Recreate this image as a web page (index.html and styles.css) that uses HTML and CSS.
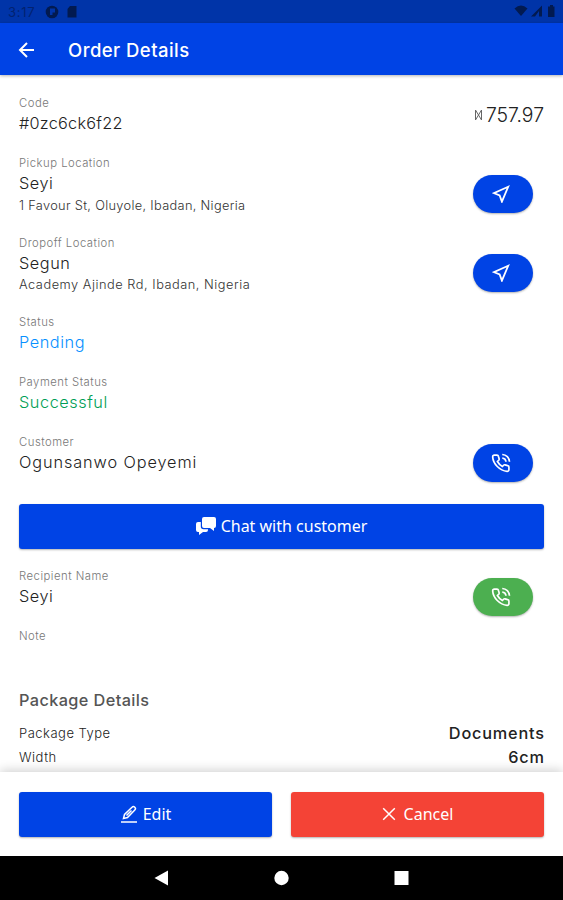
FILE: index.html
```html
<!DOCTYPE html>
<html lang="en">
  <head>
    <meta charset="utf-8">
    <meta name="viewport" content="width=device-width, initial-scale=1">
    <title>Order Details</title>
    <link rel="stylesheet" href="styles.css">
  </head>
  <body>
    <svg width="0" height="0" class="defs">
      <symbol id="send" viewBox="0 0 20 20"><path d="M18 2 L2 9 L8.500 11.500 L11 18.500 Z"/></symbol>
      <symbol id="call" viewBox="0 0 24 24">
        <path d="M21.5 17v3a2 2 0 0 1-2.2 2C10.500 21.300 2.500 13 2 4.600A2 2 0 0 1 4 2.500h3.200a1.800 1.800 0 0 1 1.700 1.400l.9 3.300a1.800 1.800 0 0 1-.6 1.700l-1.500 1.300a15 15 0 0 0 6 6l1.400-1.500a1.800 1.800 0 0 1 1.700-.5l3.200.9a1.800 1.800 0 0 1 1.500 1.900z"/>
        <path d="M13.500 6a5 5 0 0 1 4.500 4.500M13.500 1.800a9 9 0 0 1 8.700 8.700"/>
      </symbol>
    </svg>

    <div class="statusbar">
      <span class="time">3:17</span>
      <svg class="status-icon" width="14" height="14" viewBox="0 0 14 14"><circle cx="7" cy="7" r="6.300"/><path class="cut" d="M5 3.500h5v4H7.500V10H5z"/></svg>
      <svg class="status-icon card" width="12" height="14" viewBox="0 0 12 14"><path d="M4 1h6.500v11.500h-9V4z"/></svg>
      <svg class="status-icon right" width="42" height="14" viewBox="0 0 42 14">
        <path d="M0.500 4.500Q7 -1.500 13.500 4.500L7 12z"/>
        <path d="M17 12.500L28 1.500v11h-3V7l-4 5.500z"/>
        <path d="M34 2.500h2V1h3v1.500h1.500v10.500H34z"/>
      </svg>
    </div>

    <div class="appbar">
      <svg width="18" height="18" viewBox="0 0 18 18"><path d="M16 9H2M9 2L2 9l7 7"/></svg>
      <h1>Order Details</h1>
    </div>

    <div class="content">
      <div class="row">
        <div class="field">
          <div class="label">Code</div>
          <div class="value code">#0zc6ck6f22</div>
        </div>
        <div class="price">
          <svg width="9" height="12" viewBox="0 0 9 12"><path d="M1.500 1v10M7.500 1v10M1.500 1l6 10M7.500 1l-6 10"/></svg>
          <span>757.97</span>
        </div>
      </div>

      <div class="row">
        <div class="field">
          <div class="label">Pickup Location</div>
          <div class="value">Seyi</div>
          <div class="address">1 Favour St, Oluyole, Ibadan, Nigeria</div>
        </div>
        <div class="pill"><svg width="18" height="18"><use href="#send"/></svg></div>
      </div>

      <div class="row">
        <div class="field">
          <div class="label">Dropoff Location</div>
          <div class="value">Segun</div>
          <div class="address dropoff">Academy Ajinde Rd, Ibadan, Nigeria</div>
        </div>
        <div class="pill"><svg width="18" height="18"><use href="#send"/></svg></div>
      </div>

      <div class="row">
        <div class="field">
          <div class="label">Status</div>
          <div class="value pending">Pending</div>
        </div>
      </div>

      <div class="row">
        <div class="field">
          <div class="label">Payment Status</div>
          <div class="value success">Successful</div>
        </div>
      </div>

      <div class="row">
        <div class="field">
          <div class="label">Customer</div>
          <div class="value name">Ogunsanwo Opeyemi</div>
        </div>
        <div class="pill"><svg width="20" height="20"><use href="#call"/></svg></div>
      </div>

      <div class="button chat">
        <svg width="20" height="18" viewBox="0 0 20 18">
          <path d="M8 0h10a2 2 0 0 1 2 2v7a2 2 0 0 1-2 2v3l-4-3H8a2 2 0 0 1-2-2V2a2 2 0 0 1 2-2z"/>
          <path d="M2 5h2.800v4.500A2.800 2.800 0 0 0 7.600 12.300H12V13a2 2 0 0 1-2 2H7l-4 3v-3H2a2 2 0 0 1-2-2V7a2 2 0 0 1 2-2z"/>
        </svg>
        <span>Chat with customer</span>
      </div>

      <div class="row">
        <div class="field">
          <div class="label">Recipient Name</div>
          <div class="value">Seyi</div>
        </div>
        <div class="pill green"><svg width="20" height="20"><use href="#call"/></svg></div>
      </div>

      <div class="row note">
        <div class="label">Note</div>
      </div>

      <h2>Package Details</h2>
      <div class="detail"><span>Package Type</span><b>Documents</b></div>
      <div class="detail"><span>Width</span><b>6cm</b></div>
    </div>

    <div class="footer">
      <div class="button">
        <svg class="line" width="18" height="18" viewBox="0 0 18 18"><path d="M1 17h16M3.500 13.500l1-4L12 2.200a1.900 1.900 0 0 1 2.800 2.800L7.500 12.500zM6.500 10.500l5-5"/></svg>
        <span>Edit</span>
      </div>
      <div class="button cancel">
        <svg class="line" width="14" height="14" viewBox="0 0 14 14"><path d="M1.200 1.200l11.600 11.600M12.800 1.200L1.200 12.800"/></svg>
        <span>Cancel</span>
      </div>
    </div>

    <div class="navbar">
      <svg width="15" height="16" viewBox="0 0 15 16"><path d="M14 0.500v15L0.500 8z"/></svg>
      <svg width="15" height="16" viewBox="0 0 15 16"><circle cx="7.500" cy="8" r="7.200"/></svg>
      <svg width="15" height="16" viewBox="0 0 15 16"><path d="M0.500 1h14v14H0.500z"/></svg>
    </div>
  </body>
</html>
```
FILE: styles.css
```css
* {
  box-sizing: border-box;
}

body {
  display: flex;
  flex-direction: column;
  height: 900px;
  margin: 0;
  overflow: hidden;
  background: #fff;
  color: #222;
  font-family: Inter, "Liberation Sans", sans-serif;
}

svg {
  flex: none;
  display: block;
}

.defs {
  position: absolute;
}

/* top bars */
.statusbar {
  display: flex;
  flex: none;
  align-items: center;
  height: 23px;
  padding: 0 8px;
  background: #0034a8;
  color: #022270;
  font-size: 13px;
}

.time {
  width: 37px;
  letter-spacing: 0.7px;
}

.status-icon {
  fill: #021a50;
}

.cut {
  fill: #0034a8;
}

.card {
  margin-left: 7px;
}

.right {
  margin: 0 -1px 2px auto;
}

.appbar {
  display: flex;
  flex: none;
  align-items: center;
  height: 52px;
  padding: 2px 18px 0;
  background: #0043e5;
  box-shadow: 0 1px 3px rgba(0, 0, 0, 0.3);
  color: #fff;
}

.appbar svg {
  fill: none;
  stroke: #fff;
  stroke-width: 2;
}

h1 {
  margin: 0 0 0 32px;
  font-size: 18.5px;
  font-weight: 500;
  letter-spacing: 0.45px;
}

/* order */
.content {
  flex: 1;
  min-height: 0;
  padding: 19px 19px 0;
  overflow: hidden;
}

.row {
  display: flex;
  align-items: center;
  justify-content: space-between;
}

.field {
  padding-bottom: 19px;
}

.label {
  color: #777;
  font-size: 11.3px;
  font-weight: 300;
  letter-spacing: 0.5px;
  line-height: 18px;
}

.value {
  font-size: 16.3px;
  font-weight: 300;
  letter-spacing: 0.55px;
  line-height: 22.8px;
}

.code {
  letter-spacing: 0.25px;
}

.name {
  letter-spacing: 0.9px;
}

.address {
  padding-top: 1px;
  color: #333;
  font-size: 12.8px;
  font-weight: 300;
  letter-spacing: 0.32px;
  line-height: 19px;
}

.dropoff {
  letter-spacing: 0.52px;
}

.pending {
  color: #0790ff;
}

.success {
  color: #009e55;
}

.price {
  display: flex;
  align-items: center;
  align-self: flex-start;
  gap: 3px;
  height: 42px;
  font-size: 19.4px;
  font-weight: 300;
}

.price svg {
  fill: none;
  stroke: #666;
}

.pill {
  display: flex;
  align-items: center;
  justify-content: center;
  width: 60px;
  height: 38px;
  margin-right: 11px;
  border-radius: 19px;
  background: #0043e5;
  box-shadow: 0 1px 2px rgba(0, 0, 0, 0.3);
}

.pill svg {
  margin-right: 4px;
  fill: none;
  stroke: #fff;
  stroke-width: 2;
}

.green {
  background: #4caf50;
}

.button {
  display: flex;
  flex: 1;
  align-items: center;
  justify-content: center;
  gap: 5px;
  height: 45px;
  border-radius: 3px;
  background: #0043e5;
  box-shadow: 0 1px 2px rgba(0, 0, 0, 0.3);
  color: #fff;
  font-family: "Noto Sans", sans-serif;
  font-size: 16px;
}

.button svg {
  fill: #fff;
}

.button .line {
  fill: none;
  stroke: #fff;
  stroke-width: 1.5;
}

.chat {
  margin: 11px 0 18.5px;
}

.note {
  height: 60px;
  align-items: flex-start;
}

h2 {
  margin: 0 0 8px;
  color: #555;
  font-size: 16.3px;
  font-weight: 500;
  letter-spacing: 0.4px;
  line-height: 26px;
}

.detail {
  display: flex;
  align-items: center;
  justify-content: space-between;
  height: 24px;
  font-size: 13px;
  font-weight: 300;
  letter-spacing: 0.5px;
}

.detail b {
  margin-right: -0.8px;
  font-size: 16.3px;
  font-weight: 500;
  letter-spacing: 0.8px;
}

/* bottom bars */
.footer {
  display: flex;
  flex: none;
  gap: 19px;
  height: 84px;
  padding: 20px 19px 0;
  background: #fff;
  box-shadow: 0 -2px 10px rgba(0, 0, 0, 0.18);
}

.footer .button {
  padding-bottom: 1px;
}

.footer .cancel {
  gap: 8px;
  background: #f44336;
}

.navbar {
  display: flex;
  flex: none;
  justify-content: center;
  gap: 105px;
  height: 44px;
  padding-top: 14px;
  background: #000;
}

.navbar svg {
  fill: #fff;
}
```
